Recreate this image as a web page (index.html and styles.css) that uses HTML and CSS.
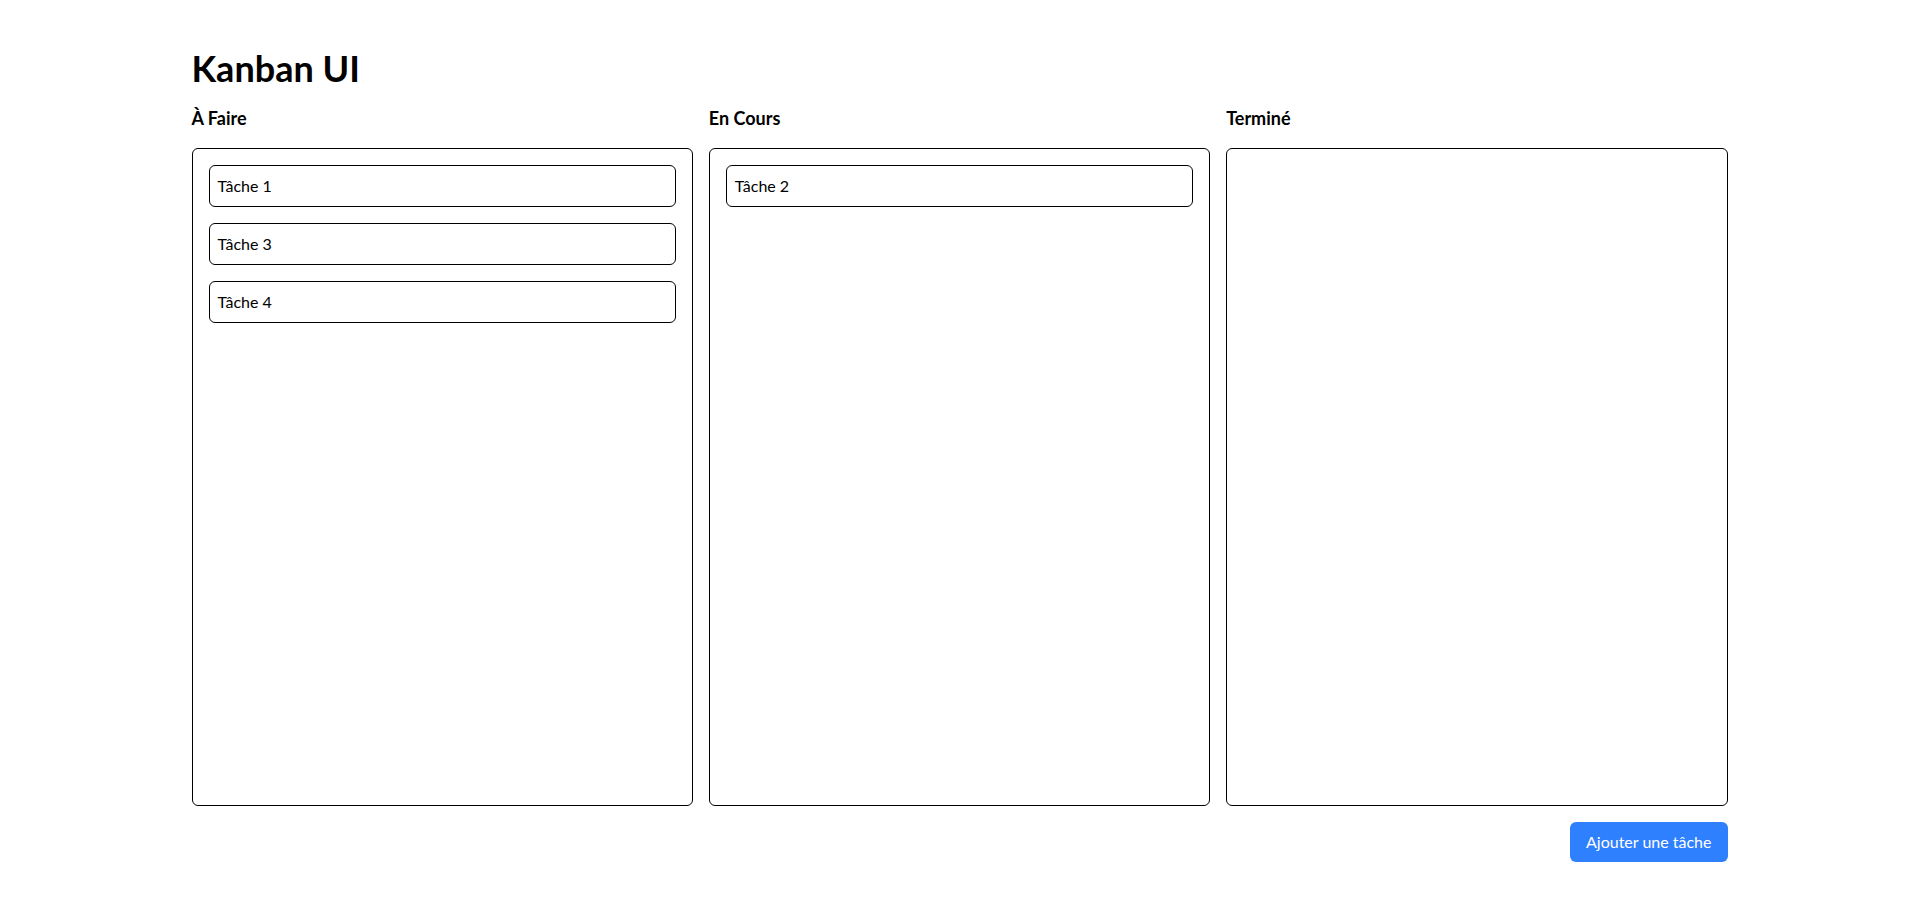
FILE: index.html
```html
<!DOCTYPE html>
<html lang="fr">
<head>
<meta charset="utf-8">
<title>Kanban UI</title>
<link rel="stylesheet" href="styles.css">
</head>
<body>
<div class="page">
  <h1 class="title">Kanban UI</h1>
  <div class="board">
    <section class="column">
      <h2 class="column-title">À Faire</h2>
      <div class="column-body">
        <div class="card">Tâche 1</div>
        <div class="card">Tâche 3</div>
        <div class="card">Tâche 4</div>
      </div>
    </section>
    <section class="column">
      <h2 class="column-title">En Cours</h2>
      <div class="column-body">
        <div class="card">Tâche 2</div>
      </div>
    </section>
    <section class="column">
      <h2 class="column-title">Terminé</h2>
      <div class="column-body"></div>
    </section>
  </div>
  <div class="actions">
    <button class="add-btn" type="button">Ajouter une tâche</button>
  </div>
</div>
</body>
</html>
```
FILE: styles.css
```css
* { box-sizing: border-box; }
html, body { margin: 0; padding: 0; background: #fff; }
body {
  font-family: Lato, "Noto Sans", "Liberation Sans", sans-serif;
  color: #000;
  font-size: 16px;
  line-height: 24px;
}
.page {
  width: 1536px;
  margin: 0 auto;
  padding-top: 48px;
}
.title {
  margin: 0 0 16px;
  font-size: 36px;
  line-height: 40px;
  font-weight: 700;
}
.board {
  display: grid;
  grid-template-columns: repeat(3, 1fr);
  gap: 16px;
}
.column-title {
  margin: 0 0 16px;
  font-size: 18px;
  line-height: 28px;
  font-weight: 700;
}
.column-body {
  height: 658px;
  border: 1px solid #000;
  border-radius: 6px;
  padding: 16px;
}
.card {
  border: 1px solid #000;
  border-radius: 6px;
  padding: 8px;
  margin-bottom: 16px;
  font-size: 16px;
  line-height: 24px;
}
.actions {
  display: flex;
  justify-content: flex-end;
  margin-top: 16px;
}
.add-btn {
  font-family: inherit;
  font-size: 16px;
  line-height: 24px;
  color: #fff;
  background: #2f80ff;
  border: none;
  border-radius: 6px;
  padding: 8px 16px;
  cursor: pointer;
}
```
